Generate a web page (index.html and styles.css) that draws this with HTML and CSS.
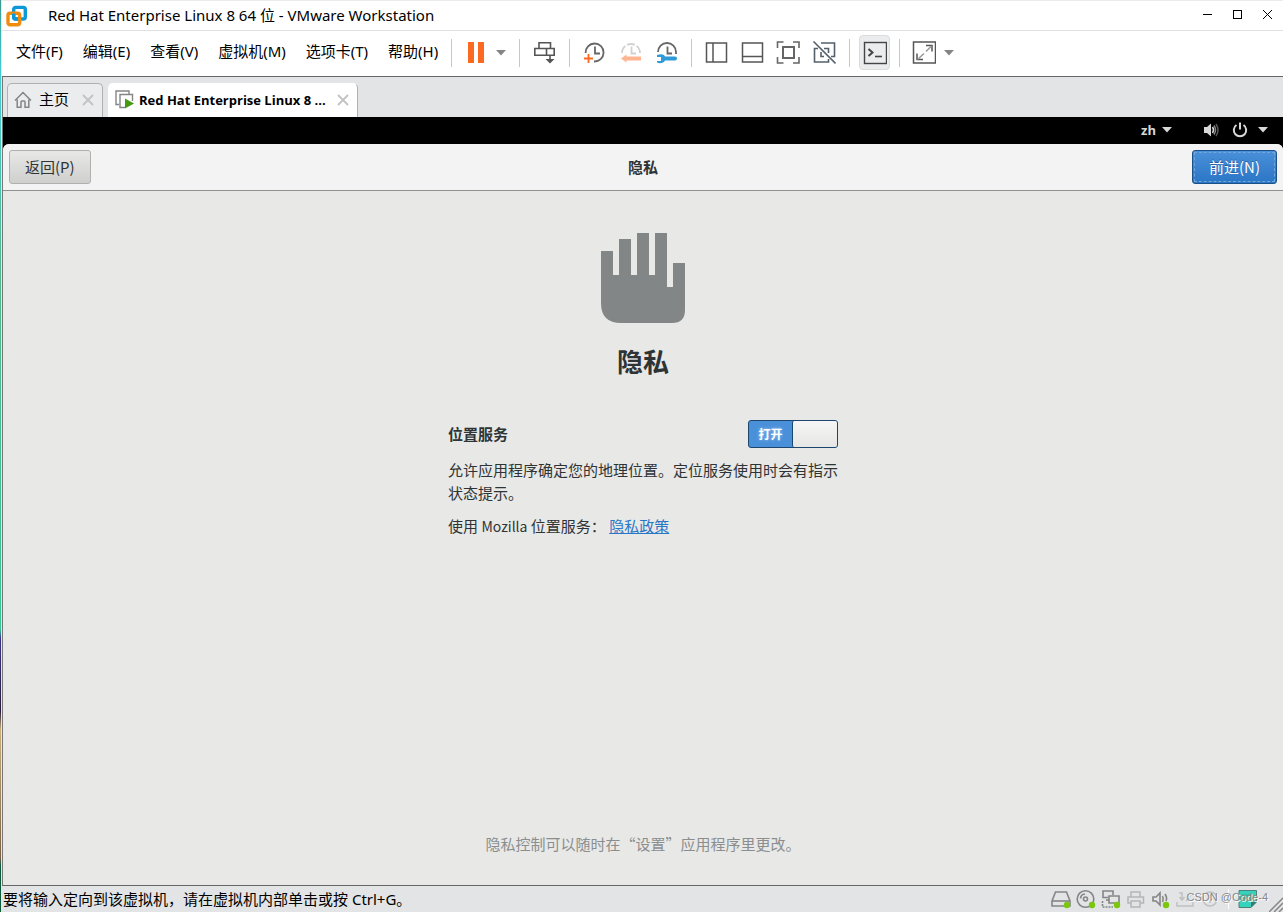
FILE: index.html
```html
<!DOCTYPE html>
<html lang="zh-CN">
<head>
<meta charset="utf-8">
<title>Red Hat Enterprise Linux 8 64 位 - VMware Workstation</title>
<link rel="stylesheet" href="styles.css">
</head>
<body>
<div class="desktop-edge"></div>
<div class="window">
  <header class="titlebar">
    <svg class="app-logo" width="22" height="22" viewBox="0 0 22 22" fill="none" stroke-width="3.4">
      <rect x="7.7" y="2.4" width="11.6" height="11.6" rx="2" stroke="#0d98d6"/>
      <rect x="2" y="8.2" width="11.6" height="11.6" rx="2" stroke="#f08b0c"/>
      <path d="M7.7 8.5V12Q7.7 14 9.7 14H12" stroke="#0d98d6"/>
    </svg>
    <h1 class="window-title">Red Hat Enterprise Linux 8 64 位 - VMware Workstation</h1>
    <div class="window-controls">
      <button class="win-btn" aria-label="最小化"><svg width="12" height="12" viewBox="0 0 12 12"><path d="M1 4.5H10" stroke="#000"/></svg></button>
      <button class="win-btn" aria-label="最大化"><svg width="12" height="12" viewBox="0 0 12 12"><rect x="1.5" y="0.5" width="8" height="8" fill="none" stroke="#000"/></svg></button>
      <button class="win-btn" aria-label="关闭"><svg width="12" height="12" viewBox="0 0 12 12"><path d="M1 0L10 9M10 0L1 9" stroke="#000"/></svg></button>
    </div>
  </header>

  <div class="menubar">
    <nav class="menus">
      <button class="menu">文件(F)</button>
      <button class="menu">编辑(E)</button>
      <button class="menu">查看(V)</button>
      <button class="menu">虚拟机(M)</button>
      <button class="menu">选项卡(T)</button>
      <button class="menu">帮助(H)</button>
    </nav>
    <div class="tools">
      <button class="tool" aria-label="挂起"><svg width="24" height="24" viewBox="0 0 24 24" fill="#fb6a20"><rect x="4" y="1" width="6" height="21"/><rect x="14" y="1" width="6" height="21"/></svg></button>
      <button class="tool caret" aria-label="电源选项"><svg width="10" height="6" viewBox="0 0 10 6"><path d="M0 0H10L5 5.5Z" fill="#858585"/></svg></button>
    </div>
    <div class="tools">
      <button class="tool" aria-label="发送 Ctrl+Alt+Del"><svg width="24" height="24" viewBox="0 0 24 24" fill="none" stroke="#555" stroke-width="1.6"><path d="M7 7.5V1.800H18.500V7.500"/><path d="M2.8 7.5H22.2V14.200H2.8Z"/><path d="M14.500 7.500V14M18 14V20"/><path d="M13.500 18L18 22.500L22.500 18Z" fill="#555" stroke="none"/></svg></button>
    </div>
    <div class="tools">
      <button class="tool" aria-label="拍摄快照"><svg width="24" height="24" viewBox="0 0 24 24" fill="none" stroke-width="1.8"><path d="M3.6 12A9 9 0 1 1 12 20.500" stroke="#666"/><path d="M13 5.500V12.500H18" stroke="#666"/><path d="M2 17.500H11M6.500 13V22" stroke="#fb6a20"/></svg></button>
      <button class="tool" aria-label="恢复快照"><svg width="24" height="24" viewBox="0 0 24 24" fill="none" stroke-width="1.8"><path d="M4 12A9 9 0 1 1 22 12" stroke="#d2d2d2" stroke-dasharray="8 2"/><path d="M13.500 5.500V12.500H18" stroke="#d2d2d2"/><path d="M3 17.500L8.500 13.500V15.500H23V19.500H8.500V21.500Z" fill="#ffb591"/></svg></button>
      <button class="tool" aria-label="快照管理器"><svg width="24" height="24" viewBox="0 0 24 24" fill="none" stroke-width="1.8"><path d="M4 11A9 9 0 0 1 22 11V13" stroke="#666"/><path d="M13.5 5.5V12.5H18" stroke="#666"/><path d="M3 14C7 12.5 10 13 11 15.5H21A2 2 0 0 1 21 19.5H11C10 22 6 23 3 21.5V20H7V16H3Z" fill="#2e9bd8"/></svg></button>
    </div>
    <div class="tools">
      <button class="tool" aria-label="显示库"><svg width="24" height="24" viewBox="0 0 24 24" fill="none" stroke="#555" stroke-width="1.5"><rect x="2.5" y="2" width="20" height="19"/><path d="M9 2V21"/></svg></button>
      <button class="tool" aria-label="缩略图栏"><svg width="24" height="24" viewBox="0 0 24 24" fill="none" stroke="#555" stroke-width="1.5"><rect x="2.5" y="2" width="20" height="19"/><path d="M2.5 15.5H22.5"/></svg></button>
      <button class="tool" aria-label="全屏"><svg width="24" height="24" viewBox="0 0 24 24" fill="none" stroke="#666" stroke-width="1.6"><path d="M1.5 7V1H7.5M17 1H23V7M23 16V22H17M7.5 22H1.5V16"/><rect x="7" y="6" width="11" height="11" stroke-width="2"/></svg></button>
      <button class="tool" aria-label="Unity"><svg width="24" height="24" viewBox="0 0 24 24" fill="none" stroke="#56606a" stroke-width="1.6"><path d="M9 2H22.500V15.500H19M6 7.500H2.500V21H16.500V18M12 7.500H16.500V12M9 11V15.500H12"/><path d="M1.500 0.500L23.500 22.500"/></svg></button>
    </div>
    <div class="tools tools-tight">
      <button class="tool tool-active" aria-label="控制台视图"><svg width="24" height="24" viewBox="0 0 24 24" fill="none" stroke="#444"><rect x="1.5" y="1.5" width="22" height="21" stroke-width="1.4"/><path d="M5.5 8L9.5 11.5L5.5 15" stroke-width="2"/><path d="M12 15.5H19" stroke-width="1.6"/></svg></button>
    </div>
    <div class="tools">
      <button class="tool" aria-label="拉伸客户机"><svg width="24" height="24" viewBox="0 0 24 24" fill="none" stroke="#555" stroke-width="1.5"><rect x="1.5" y="1" width="22" height="21"/><path d="M14 4.5H20V10.5M5 12.5V18.5H11"/><path d="M19.5 5L14 10.5M12 12.5L5.5 18.5" stroke="#999"/></svg></button>
      <button class="tool caret" aria-label="拉伸选项"><svg width="10" height="6" viewBox="0 0 10 6"><path d="M0 0H10L5 5.5Z" fill="#858585"/></svg></button>
    </div>
  </div>

  <div class="tabs">
    <div class="tab">
      <svg width="18" height="18" viewBox="0 0 18 18" fill="none" stroke="#858585" stroke-width="1.5"><path d="M1 9.5L9 1.5L17 9.5M3.2 8.5V16.2H7V11Q7 10 8 10H10Q11 10 11 11V16.2H14.8V8.5"/></svg>
      <button class="tab-name">主页</button>
      <button class="tab-close" aria-label="关闭 主页"><svg width="12" height="12" viewBox="0 0 12 12"><path d="M1 1L11 11M11 1L1 11" stroke="#c3c3c3" stroke-width="1.8"/></svg></button>
    </div>
    <div class="tab tab-current">
      <svg width="19" height="19" viewBox="0 0 19 19"><path d="M4 14.5H1V1H14V4M10 17.5H5V4.5H17.5V11" fill="none" stroke="#858585" stroke-width="1.4"/><path d="M10 8.5L19 13.5L10 18.5Z" fill="#459a12"/></svg>
      <button class="tab-name">Red Hat Enterprise Linux 8 ...</button>
      <button class="tab-close" aria-label="关闭 Red Hat Enterprise Linux 8"><svg width="12" height="12" viewBox="0 0 12 12"><path d="M1 1L11 11M11 1L1 11" stroke="#c3c3c3" stroke-width="1.8"/></svg></button>
    </div>
  </div>

  <main class="guest">
    <div class="panel">
      <button class="panel-item">zh <svg width="10" height="6" viewBox="0 0 10 6"><path d="M0 0H10L5 5.5Z" fill="#d8d8d8"/></svg></button>
      <button class="panel-item panel-system" aria-label="系统菜单">
        <svg width="16" height="16" viewBox="0 0 16 16" fill="none"><path d="M1 5H4L8 1.5V14.5L4 11H1Z" fill="#d8d8d8"/><path d="M9.5 5Q11.5 8 9.5 11" stroke="#d8d8d8" stroke-width="1.5"/><path d="M11 3.5Q14 8 11 12.5" stroke="#888" stroke-width="1.5"/><path d="M13 2Q17 8 13 14" stroke="#555" stroke-width="1.5"/></svg>
        <svg width="16" height="16" viewBox="0 0 16 16" fill="none" stroke="#d8d8d8" stroke-width="2"><path d="M4.5 3A6.2 6.2 0 1 0 11.5 3M8 0.5V7.5"/></svg>
        <svg width="10" height="6" viewBox="0 0 10 6"><path d="M0 0H10L5 5.5Z" fill="#d8d8d8"/></svg>
      </button>
    </div>
    <div class="setup">
      <div class="setup-header">
        <button class="gtk-btn">返回(P)</button>
        <h2 class="setup-title">隐私</h2>
        <button class="gtk-btn gtk-primary">前进(N)</button>
      </div>
      <div class="page">
        <svg class="hand" width="86" height="92" viewBox="0 0 86 92"><path d="M1 19H13V43H19V7H31V43H37V1H49V43H55V1H67V55H73V31H85V78Q85 91 72 91H21Q1 91 1 71Z" fill="#838686"/></svg>
        <h3 class="page-title">隐私</h3>
        <section class="column">
          <div class="setting">
            <label class="setting-name" for="location">位置服务</label>
            <span class="switch">
              <input class="switch-input" type="checkbox" role="switch" id="location" checked>
              <span class="switch-on">打开</span>
              <span class="switch-knob"></span>
            </span>
          </div>
          <p class="text">允许应用程序确定您的地理位置。定位服务使用时会有指示状态提示。</p>
          <p class="text">使用 <span class="latin">Mozilla</span> 位置服务： <a class="link" href="#">隐私政策</a></p>
        </section>
        <p class="footnote">隐私控制可以随时在“设置”应用程序里更改。</p>
      </div>
    </div>
  </main>

  <footer class="statusbar">
    <p class="status-text">要将输入定向到该虚拟机，请在虚拟机内部单击或按 Ctrl+G。</p>
    <div class="devices">
      <svg width="20" height="20" viewBox="0 0 20 20" fill="none" stroke="#858585" stroke-width="1.6"><path d="M1 12L4.5 3H15.5L19 12V17H1Z"/><path d="M1 12H19"/><circle cx="16" cy="16" r="3.2" fill="#7ac70c" stroke="none"/></svg>
      <svg width="20" height="20" viewBox="0 0 20 20" fill="none" stroke="#858585" stroke-width="1.6"><circle cx="9.5" cy="10" r="8.3"/><circle cx="9.5" cy="10" r="2"/><path d="M4.5 9.5A5 5 0 0 1 9 5"/><circle cx="16" cy="16" r="3.2" fill="#7ac70c" stroke="none"/></svg>
      <svg width="20" height="20" viewBox="0 0 20 20" fill="none" stroke="#858585" stroke-width="1.6"><path d="M7 8.5H2V2H12V6"/><path d="M8 7H18V14H8Z"/><path d="M1.5 12V18H12" stroke-dasharray="2 1"/><path d="M5 11H8"/><circle cx="16" cy="16" r="3.2" fill="#7ac70c" stroke="none"/></svg>
      <svg width="20" height="20" viewBox="0 0 20 20" fill="none" stroke="#b5b5b5" stroke-width="1.5"><path d="M5 8V3H14V8M5 14H2V8H17.5V14H14M5 12H14V18H5Z"/></svg>
      <svg width="20" height="20" viewBox="0 0 20 20" fill="none" stroke="#858585" stroke-width="1.6"><path d="M2 8H5L9 4V16L5 12H2Z"/><path d="M11.5 7Q13 10 11.5 13M14 5Q16.5 9 15 12"/><circle cx="15" cy="16" r="3.2" fill="#7ac70c" stroke="none"/></svg>
      <svg width="20" height="20" viewBox="0 0 20 20" fill="none" stroke="#c0c0c0" stroke-width="1.5"><path d="M3 4H6V10M3.5 8L6 11L8.5 8M1 13V17H17V13M10 12L15 6"/></svg>
      <svg width="20" height="20" viewBox="0 0 20 20" fill="none" stroke="#c0c0c0" stroke-width="1.5"><circle cx="9" cy="10" r="7"/><path d="M6 10H12M9 6V14"/></svg>
      <span class="divider"></span>
      <svg width="20" height="20" viewBox="0 0 20 20"><path d="M1 1.5H18.5V13L13 18.5H1Z" fill="#35d3bb" stroke="#4d817b"/><path d="M13 18.5V13H18.5Z" fill="#397b73"/><path d="M4 6H15M4 9H15M4 12H10" stroke="#4d9f94"/></svg>
    </div>
    <svg class="grip" width="14" height="16" viewBox="0 0 14 16" stroke="#858585" stroke-width="1.5"><path d="M0 16L14 2M5 16L14 7M10 16L14 12"/></svg>
    <span class="watermark">CSDN @Code-4</span>
  </footer>
</div>
</body>
</html>
```
FILE: styles.css
```css
* { box-sizing: border-box; }

body {
  margin: 0;
  display: flex;
  height: 100vh;
  overflow: hidden;
  background: #fff;
  color: #000;
  font-family: "Noto Sans", "Noto Sans CJK SC", sans-serif;
  font-size: 15px;
}

h1, h2, h3, p { margin: 0; }

button {
  margin: 0;
  padding: 0;
  border: 0;
  background: none;
  color: inherit;
  font: inherit;
}

svg { display: block; flex: none; }

.desktop-edge {
  width: 2px;
  flex: none;
  border-right: 1px solid #e4e8e8;
  background: linear-gradient(#3c9a8c 0%, #45cbd4 8%, #4fb98c 30%, #35c795 69%, #3b3489 70%, #2a1c3c 78%, #c9ae78 80%, #7b5f42 94%, #0b5c3b 95%);
}

.window {
  flex: 1;
  min-width: 0;
  display: flex;
  flex-direction: column;
}

.titlebar {
  display: flex;
  align-items: center;
  height: 31px;
  flex: none;
  padding-left: 4px;
  border-top: 1px solid #ececec;
  border-bottom: 1px solid #e2e2e2;
}

.window-title {
  flex: 1;
  margin-left: 20px;
  padding-bottom: 2px;
  font-size: 15px;
  font-weight: 400;
  line-height: 24px;
}

.window-controls { display: flex; }

.win-btn {
  width: 30px;
  height: 28px;
  display: grid;
  place-items: center;
}

.menubar {
  display: flex;
  align-items: center;
  height: 45px;
  flex: none;
  padding-bottom: 2px;
}

.menus {
  display: flex;
  gap: 20px;
  padding: 0 13px 4px 14px;
  white-space: nowrap;
}

.tools {
  display: flex;
  align-items: center;
  gap: 12px;
  height: 28px;
  padding: 0 13px 0 12px;
  border-left: 1px solid #c8c8c8;
}

.tools-tight { padding: 0 9px; }

.tool.caret { margin-left: -4px; }

.tool-active {
  width: 31px;
  height: 35px;
  display: grid;
  place-items: center;
  border: 1px solid #dadbdc;
  border-radius: 4px;
  background: #ebecee;
}

.tabs {
  display: flex;
  align-items: flex-end;
  gap: 5px;
  height: 41px;
  flex: none;
  padding-left: 4px;
  border-top: 1px solid #666;
  border-left: 1px solid #777;
  background: #e3e4e6;
}

.tab {
  display: flex;
  align-items: center;
  height: 34px;
  padding: 0 8px 2px 6px;
  border: 1px solid #b0b0b0;
  border-bottom: 0;
  border-radius: 5px 5px 0 0;
  background: #ebecee;
}

.tab-name { margin: 0 13px 0 7px; padding-bottom: 3px; }

.tab-current {
  border-color: #fff #b0b0b0 #fff #fff;
  background: #fff;
  font-family: "Open Sans", sans-serif;
  font-size: 13px;
  font-weight: 700;
}

.tab-current .tab-name { margin: 0 11px 0 5px; padding-bottom: 0; }

.guest {
  flex: 1;
  display: flex;
  flex-direction: column;
  min-height: 0;
  border-left: 1px solid #777;
  border-bottom: 1px solid #666;
  background: #000;
  color: #2e3436;
  font-family: "Noto Sans CJK SC", sans-serif;
}

.panel {
  display: flex;
  justify-content: flex-end;
  gap: 31px;
  height: 27px;
  flex: none;
  padding: 0 15px 2px 0;
  color: #d8d8d8;
  font-family: "Open Sans", sans-serif;
  font-size: 13px;
  font-weight: 700;
}

.panel-item {
  display: flex;
  align-items: center;
  gap: 6px;
}

.panel-system { gap: 13px; }

.panel-system svg:last-child { margin-left: -3px; }

.setup {
  flex: 1;
  display: flex;
  flex-direction: column;
  border-radius: 6px 6px 0 0;
  background: #e8e8e6;
}

.setup-header {
  display: grid;
  grid-template-columns: 1fr auto 1fr;
  align-items: center;
  height: 47px;
  flex: none;
  padding: 0 6px;
  border-bottom: 1px solid #8f918e;
  border-radius: 6px 6px 0 0;
  background: #f3f3f3;
}

.setup-title {
  padding-bottom: 2px;
  font-size: 15px;
  font-weight: 700;
}

.gtk-btn {
  justify-self: start;
  height: 34px;
  padding: 0 15px 2px;
  border: 1px solid #b0b0ac;
  border-radius: 3px;
  background: linear-gradient(#e8e8e7, #cfcfcd);
  font-size: 15px;
}

.gtk-primary {
  justify-self: end;
  padding: 0 16px 2px;
  border-color: #1c5187;
  background: linear-gradient(#4a90d9, #2a76c6);
  outline: 1px dashed #6fa6de;
  outline-offset: -3px;
  color: #fff;
  text-shadow: 0 -1px #255f9c;
}

.page {
  flex: 1;
  display: flex;
  flex-direction: column;
  align-items: center;
  padding: 41px 20px 29px;
}

.page-title {
  margin-top: 19px;
  font-size: 26px;
  line-height: 36px;
}

.column {
  width: 390px;
  max-width: 100%;
  margin-top: 41px;
}

.setting {
  display: flex;
  align-items: center;
  justify-content: space-between;
  margin-bottom: 10px;
}

.setting-name { padding-bottom: 2px; font-weight: 700; }

.switch {
  position: relative;
  display: grid;
  grid-template-columns: 43px 1fr;
  width: 90px;
  height: 28px;
  border: 1px solid #1c4570;
  border-radius: 3px;
  background: #4a90d9;
}

.switch-input {
  position: absolute;
  inset: 0;
  width: 100%;
  height: 100%;
  margin: 0;
  opacity: 0;
}

.switch-on {
  color: #fff;
  font-size: 12px;
  font-weight: 700;
  line-height: 26px;
  text-align: center;
  text-shadow: 0 0 3px #b5d3f2;
}

.switch-knob {
  border-left: 1px solid #1c4570;
  border-radius: 2px;
  background: linear-gradient(#f6f6f6, #e6e6e4);
}

.text {
  margin-bottom: 10px;
  line-height: 23px;
}

.latin { font-size: 14px; }

.link { color: #2a76c6; }

.footnote {
  margin-top: auto;
  color: #8b8e8f;
  line-height: 24px;
}

.statusbar {
  position: relative;
  display: flex;
  align-items: center;
  justify-content: space-between;
  height: 26px;
  flex: none;
  padding-left: 1px;
  background: #e3e4e6;
}

.status-text { flex: 1; padding-bottom: 2px; }

.devices {
  display: flex;
  align-items: center;
  gap: 5px;
}

.divider {
  width: 1px;
  height: 20px;
  margin: 0 4px 0 2px;
  background: #fff;
}

.grip { align-self: flex-end; margin-left: 11px; }

.watermark {
  position: absolute;
  right: 15px;
  top: 5px;
  color: #85878a;
  font-family: "Liberation Sans", sans-serif;
  font-size: 11px;
  text-shadow: 1px 1px #fff;
}
```
